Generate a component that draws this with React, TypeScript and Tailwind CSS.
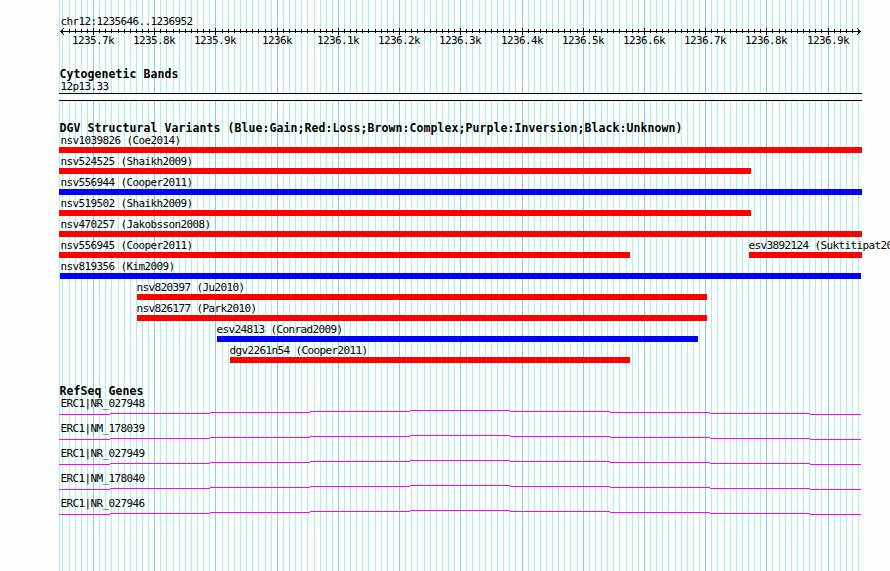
interface Feature {
	name: string;
	gap: number;
	width: number;
	color: "red" | "blue";
	indent: number;
}

const WIDTH = 890;
const HEIGHT = 571;

// steps that are 7px wide instead of 6px, counted from the first tick
const WIDE_STEPS = [0, 8, 17, 25, 32, 40, 50, 58, 67, 74, 83, 91, 99, 107, 116, 124];
const FIRST_TICK = 62;
const TICK_COUNT = 131;

const ticks = [...Array(TICK_COUNT)].map((_, n) => ({
	x: FIRST_TICK + n * 6 + WIDE_STEPS.filter((step) => step < n).length,
	major: n % 10 === 5,
}));

const scaleLabels = [
	"1235.7k",
	"1235.8k",
	"1235.9k",
	"1236k",
	"1236.1k",
	"1236.2k",
	"1236.3k",
	"1236.4k",
	"1236.5k",
	"1236.6k",
	"1236.7k",
	"1236.8k",
	"1236.9k",
];

const variantRows: Feature[][] = [
	[{ name: "nsv1039826 (Coe2014)", gap: 0, width: 803, color: "red", indent: 1 }],
	[{ name: "nsv524525 (Shaikh2009)", gap: 0, width: 692, color: "red", indent: 1 }],
	[{ name: "nsv556944 (Cooper2011)", gap: 0, width: 803, color: "blue", indent: 1 }],
	[{ name: "nsv519502 (Shaikh2009)", gap: 0, width: 692, color: "red", indent: 1 }],
	[{ name: "nsv470257 (Jakobsson2008)", gap: 0, width: 803, color: "red", indent: 1 }],
	[
		{ name: "nsv556945 (Cooper2011)", gap: 0, width: 571, color: "red", indent: 1 },
		{ name: "esv3892124 (Suktitipat2014)", gap: 119, width: 113, color: "red", indent: -1 },
	],
	[{ name: "nsv819356 (Kim2009)", gap: 1, width: 801, color: "blue", indent: 0 }],
	[{ name: "nsv820397 (Ju2010)", gap: 78, width: 570, color: "red", indent: -1 }],
	[{ name: "nsv826177 (Park2010)", gap: 78, width: 570, color: "red", indent: -1 }],
	[{ name: "esv24813 (Conrad2009)", gap: 158, width: 481, color: "blue", indent: -1 }],
	[{ name: "dgv2261n54 (Cooper2011)", gap: 171, width: 400, color: "red", indent: -1 }],
];

const genes = [
	"ERC1|NR_027948",
	"ERC1|NM_178039",
	"ERC1|NR_027949",
	"ERC1|NM_178040",
	"ERC1|NR_027946",
];

function Grid() {
	return (
		<svg
			className="absolute inset-0"
			width={WIDTH}
			height={HEIGHT}
			shapeRendering="crispEdges"
		>
			<rect x={59} y={0} width={1} height={HEIGHT} fill="#afeeee" />
			{ticks.map(({ x, major }) => (
				<rect
					key={x}
					x={x}
					y={0}
					width={1}
					height={HEIGHT}
					fill={major ? "#87ceeb" : "#afeeee"}
				/>
			))}
		</svg>
	);
}

function Ruler() {
	const majors = ticks.filter((tick) => tick.major);

	return (
		<svg
			className="block overflow-visible"
			width={803}
			height={21}
			viewBox="59 27 803 21"
		>
			<g shapeRendering="crispEdges">
				<rect x={60} y={31} width={801} height={1} />
				{ticks.map(({ x, major }) => (
					<rect
						key={x}
						x={x}
						y={major ? 28 : 29}
						width={1}
						height={major ? 7 : 4}
					/>
				))}
				<path d="M61 30h1v1h-1zM62 29h1v1h-1zM63 28h1v1h-1zM61 32h1v1h-1zM62 33h1v1h-1zM63 34h1v1h-1z" />
				<path d="M859 30h1v1h-1zM858 29h1v1h-1zM857 28h1v1h-1zM859 32h1v1h-1zM858 33h1v1h-1zM857 34h1v1h-1z" />
			</g>
			{scaleLabels.map((label, i) => (
				<text key={label} x={majors[i].x - label.length * 3} y={44}>
					{label}
				</text>
			))}
		</svg>
	);
}

function TrackTitle({ children }: { children: string }) {
	return (
		<h2 className="h-3 whitespace-pre pl-[0.4px] font-bold text-[11.5px] leading-3 tracking-[0.077px]">
			{children}
		</h2>
	);
}

function VariantRow({ features }: { features: Feature[] }) {
	return (
		<div className="flex h-[21px]">
			{features.map(({ name, gap, width, color, indent }) => (
				<div
					className="flex shrink-0 flex-col"
					key={name}
					style={{ marginLeft: gap, width }}
				>
					<span
						className="h-[15px] whitespace-pre pt-[3px] pl-[0.4px]"
						style={{ marginLeft: indent }}
					>
						{name}
					</span>
					<div
						className={color === "red" ? "h-[6px] bg-[#ff0000]" : "h-[6px] bg-[#0000ff]"}
					/>
				</div>
			))}
		</div>
	);
}

function GeneRow({ name }: { name: string }) {
	return (
		<div className="h-[25px]">
			<div className="h-3 whitespace-pre pl-[1.4px]">{name}</div>
			<svg
				className="block"
				width={802}
				height={5}
				viewBox="59 0 802 5"
				shapeRendering="crispEdges"
			>
				<path
					fill="#ff00ff"
					d="M59 4h51v1h-51zM110 3h100v1h-100zM210 2h100v1h-100zM310 1h100v1h-100zM410 0h100v1h-100zM510 1h100v1h-100zM610 2h100v1h-100zM710 3h100v1h-100zM810 4h51v1h-51z"
				/>
			</svg>
		</div>
	);
}

export default function App() {
	return (
		<div className="relative h-[571px] w-[890px] overflow-hidden bg-[#fdfffc] font-['DejaVu_Sans_Mono',monospace] text-[11px] text-black leading-3 tracking-[-0.622px]">
			<Grid />
			<main className="relative flex flex-col pt-[15px] pl-[59px]">
				<h1 className="h-3 pt-px pl-[1.4px]">chr12:1235646..1236952</h1>
				<Ruler />

				<section className="pt-5">
					<TrackTitle>Cytogenetic Bands</TrackTitle>
					<p className="h-[13px] pt-px pl-[1.4px]">12p13.33</p>
					<div className="h-2 w-[803px] border-black border-y bg-[#fdfffc]" />
				</section>

				<section className="pt-[21px]">
					<TrackTitle>
						DGV Structural Variants (Blue:Gain;Red:Loss;Brown:Complex;Purple:Inversion;Black:Unknown)
					</TrackTitle>
					<div className="-mt-[2px]">
						{variantRows.map((features) => (
							<VariantRow features={features} key={features[0].name} />
						))}
					</div>
				</section>

				<section className="pt-[22px]">
					<TrackTitle>RefSeq Genes</TrackTitle>
					<div className="pt-px">
						{genes.map((name) => (
							<GeneRow key={name} name={name} />
						))}
					</div>
				</section>
			</main>
		</div>
	);
}
